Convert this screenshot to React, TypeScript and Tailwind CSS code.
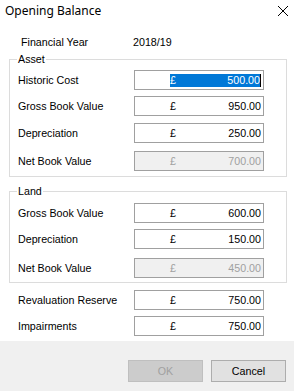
import React from "react";

const label = "font-['Liberation_Sans',Arial,sans-serif] text-[10.7px] text-black";

type Field = { name: string; value: string; disabled?: boolean; selected?: boolean; mt: string };

const asset: Field[] = [
  { name: "Historic Cost", value: "500.00", selected: true, mt: "mt-0" },
  { name: "Gross Book Value", value: "950.00", mt: "mt-[6px]" },
  { name: "Depreciation", value: "250.00", mt: "mt-[7px]" },
  { name: "Net Book Value", value: "700.00", disabled: true, mt: "mt-[8px]" },
];

const land: Field[] = [
  { name: "Gross Book Value", value: "600.00", mt: "mt-0" },
  { name: "Depreciation", value: "150.00", mt: "mt-[6px]" },
  { name: "Net Book Value", value: "450.00", disabled: true, mt: "mt-[9px]" },
];

function Row({ f }: { f: Field }) {
  return (
    <div className={`flex items-center h-[20px] ${f.mt}`}>
      <div className={`${label} w-[116px]`}>{f.name}</div>
      <div
        className={`flex items-center h-[20px] w-[130px] border border-[#a0a0a0] pl-[35px] pr-[2px] ${
          f.disabled ? "bg-[#f0f0f0] text-[#a0a0a0]" : "bg-white text-black"
        } font-['Liberation_Sans',Arial,sans-serif] text-[10.7px]`}
      >
        <div
          className={`flex flex-1 items-center justify-between h-[13px] ${
            f.selected ? "bg-[#0078d7] text-white border-r border-black" : ""
          }`}
        >
          <span>£</span>
          <span>{f.value}</span>
        </div>
      </div>
    </div>
  );
}

function Group({ title, fields, cls }: { title: string; fields: Field[]; cls: string }) {
  return (
    <div className={`relative mx-[9px] w-[278px] border border-[#dcdcdc] pl-[8px] ${cls}`}>
      <span className={`${label} absolute -top-[8px] left-[7px] bg-white px-[1px] leading-[14px]`}>{title}</span>
      {fields.map((f) => (
        <Row key={f.name} f={f} />
      ))}
    </div>
  );
}

export default function App() {
  return (
    <div className="flex flex-col w-[294px] h-[391px] bg-white overflow-hidden">
      <div className="flex items-center justify-between h-[22px] pl-[5px] pr-[4px]">
        <span className="font-['Noto_Sans',sans-serif] text-[12px] text-black">Opening Balance</span>
        <svg width="12" height="12" viewBox="0 0 12 12" className="mr-[1px]">
          <path d="M1 1L11 11M11 1L1 11" stroke="#000" strokeWidth="1" />
        </svg>
      </div>

      <div className="flex items-center h-[20px] mt-[10px] pl-[21px]">
        <span className={`${label} w-[112px]`}>Financial Year</span>
        <span className={label}>2018/19</span>
      </div>

      <Group title="Asset" fields={asset} cls="mt-[7px] pt-[10px] pb-[5px]" />
      <Group title="Land" fields={land} cls="mt-[14px] pt-[11px] pb-[4px]" />

      <div className="pl-[18px] mt-[7px]">
        <Row f={{ name: "Revaluation Reserve", value: "750.00", mt: "mt-0" }} />
        <Row f={{ name: "Impairments", value: "750.00", mt: "mt-[6px]" }} />
      </div>

      <div className="flex flex-1 justify-end gap-[8px] mt-[5px] bg-[#f0f0f0] pt-[19px] pr-[8px]">
        <button className="h-[22px] w-[75px] border border-[#bfbfbf] bg-[#cccccc] text-[#a0a0a0] font-['Liberation_Sans',Arial,sans-serif] text-[10.7px]">
          OK
        </button>
        <button className="h-[22px] w-[75px] border border-[#adadad] bg-[#e1e1e1] text-black font-['Liberation_Sans',Arial,sans-serif] text-[10.7px]">
          Cancel
        </button>
      </div>
    </div>
  );
}
